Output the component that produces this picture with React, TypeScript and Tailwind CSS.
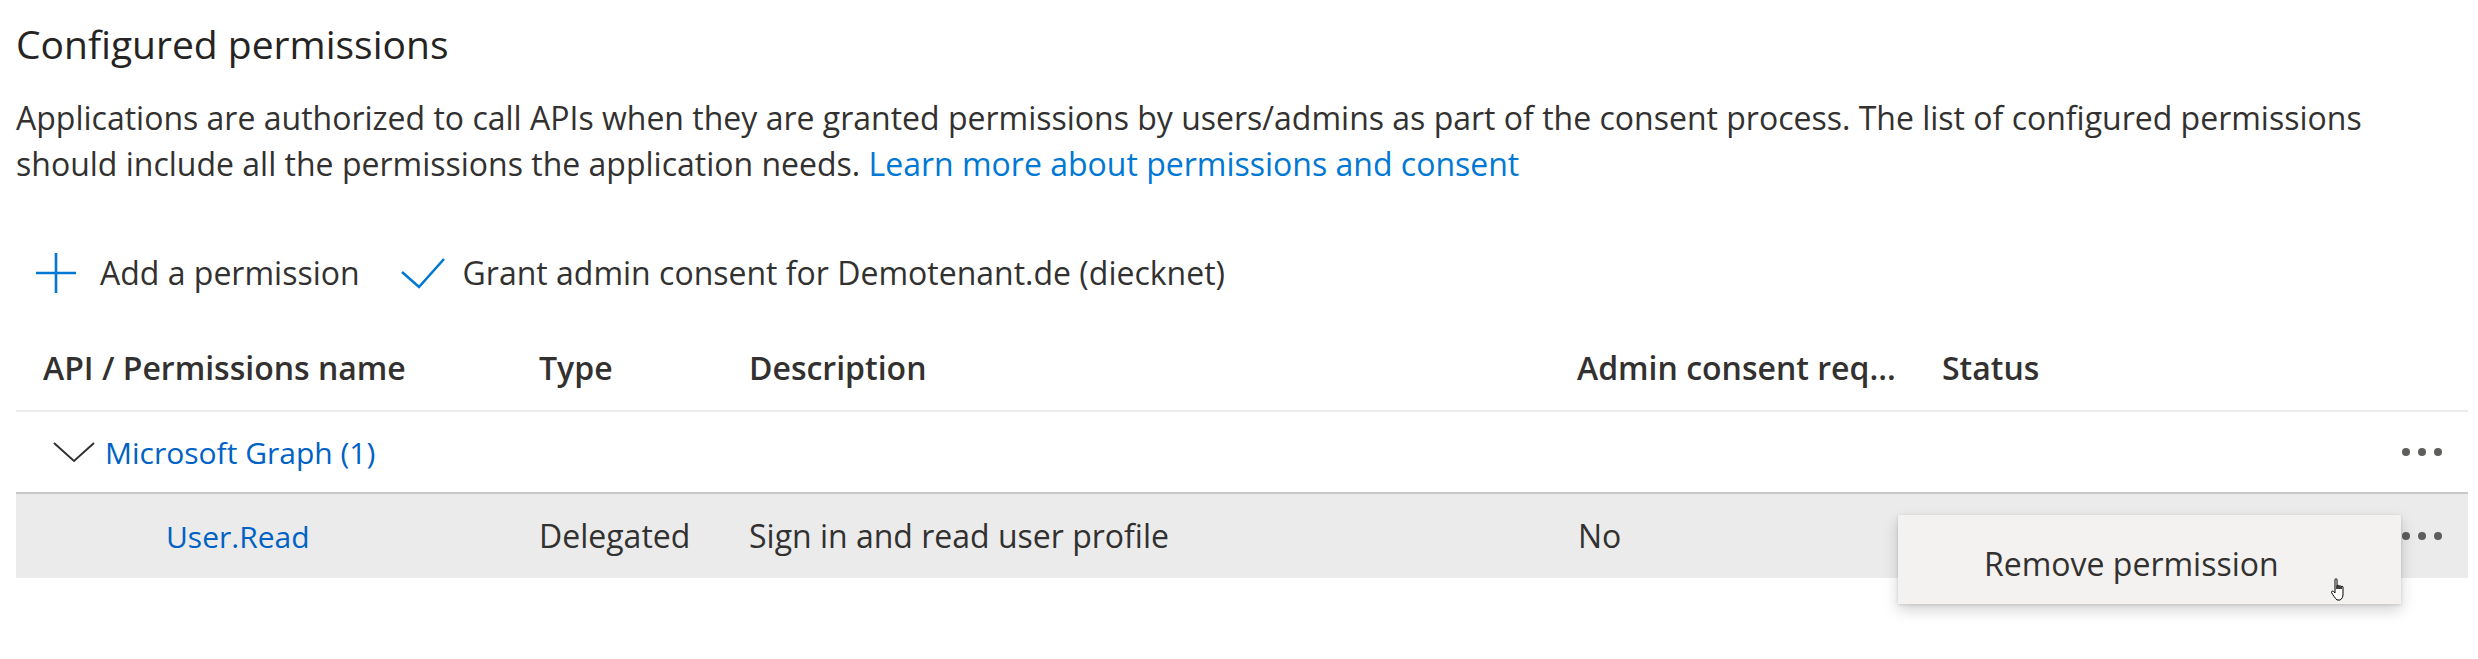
const COLS = 'grid grid-cols-[496px_210px_828px_365px_465px_1fr]';

function Dots() {
  return (
    <div className="flex items-center gap-[8px] justify-end pr-[26px]">
      <span className="w-[8px] h-[8px] rounded-full bg-[#605e5c]" />
      <span className="w-[8px] h-[8px] rounded-full bg-[#605e5c]" />
      <span className="w-[8px] h-[8px] rounded-full bg-[#605e5c]" />
    </div>
  );
}

export default function App() {
  return (
    <div className="relative w-[2478px] h-[659px] bg-white text-[#323130] font-['Open_Sans',sans-serif] overflow-hidden">
      <div className="pl-[16px] pr-[10px]">
        <h2 className="mt-[16px] text-[39px] leading-[56px] font-normal text-[#252423]">Configured permissions</h2>

        <p className="mt-[23px] text-[32px] leading-[46px] w-[2420px]">
          Applications are authorized to call APIs when they are granted permissions by users/admins as part of the consent process. The list of configured permissions should include all the permissions the application needs.{' '}
          <a className="text-[#0078d4]" href="#">Learn more about permissions and consent</a>
        </p>

        <div className="mt-[56px] h-[60px] flex items-center text-[32px]">
          <button className="flex items-center pl-[19px] pr-[40px] h-full">
            <svg width="42" height="42" viewBox="0 0 42 42" className="shrink-0">
              <path d="M21 1 V41 M1 21 H41" stroke="#0078d4" strokeWidth="2.6" fill="none" />
            </svg>
            <span className="ml-[23px]">Add a permission</span>
          </button>
          <button className="flex items-center h-full">
            <svg width="46" height="32" viewBox="0 0 46 32" className="shrink-0">
              <polyline points="2,15 19,30 44,2" stroke="#0078d4" strokeWidth="2.6" fill="none" />
            </svg>
            <span className="ml-[17px]">Grant admin consent for Demotenant.de (diecknet)</span>
          </button>
        </div>

        <div className="mt-[22px] w-[2452px] text-[32px]">
          <div className={`${COLS} h-[87px] items-center font-semibold border-b-2 border-[#edebe9]`}>
            <div className="pl-[27px]">API / Permissions name</div>
            <div className="pl-[27px]">Type</div>
            <div className="pl-[27px]">Description</div>
            <div className="pl-[27px] whitespace-nowrap">Admin consent req...</div>
            <div className="pl-[27px]">Status</div>
            <div />
          </div>

          <div className={`${COLS} h-[80px] items-center`}>
            <div className="flex items-center pl-[36px]">
              <svg width="44" height="24" viewBox="0 0 44 24" className="shrink-0">
                <polyline points="2,3 22,21 42,3" fill="none" stroke="#323130" strokeWidth="2" />
              </svg>
              <a href="#" className="ml-[9px] text-[30px] text-[#0062c4] whitespace-nowrap">Microsoft Graph (1)</a>
            </div>
            <div />
            <div />
            <div />
            <div />
            <Dots />
          </div>

          <div className={`${COLS} h-[86px] items-center bg-[#ebebeb] border-t-2 border-[#c8c8c8]`}>
            <div className="pl-[150px]">
              <a href="#" className="text-[30px] text-[#0062c4]">User.Read</a>
            </div>
            <div className="pl-[27px]">Delegated</div>
            <div className="pl-[27px]">Sign in and read user profile</div>
            <div className="pl-[28px]">No</div>
            <div />
            <Dots />
          </div>
        </div>
      </div>

      <div className="absolute left-[1898px] top-[515px] w-[503px] h-[89px] bg-[#f3f2f1] shadow-[0_6px_14px_rgba(0,0,0,0.18),0_1px_3px_rgba(0,0,0,0.12)] flex items-center pl-[86px] text-[32px] pt-[8px]">
        Remove permission
        <svg className="absolute left-[432px] top-[62px]" width="20" height="26" viewBox="0 0 20 26">
          <path d="M5 2.5 C5 1.5 7 1.5 7 2.5 L7 12 L7 9 C7 8 9 8 9 9 L9 12 L9 9.5 C9 8.5 11 8.5 11 9.5 L11 12 L11 10 C11 9 13 9 13 10 L13 17 C13 20 12 22 10 23 L7 23 C5 21 3 18 1.5 15.5 C1 14.5 2.5 13.5 3.5 14.5 L5 16 Z" fill="#fff" stroke="#000" strokeWidth="1" strokeLinejoin="round" />
        </svg>
      </div>
    </div>
  );
}
